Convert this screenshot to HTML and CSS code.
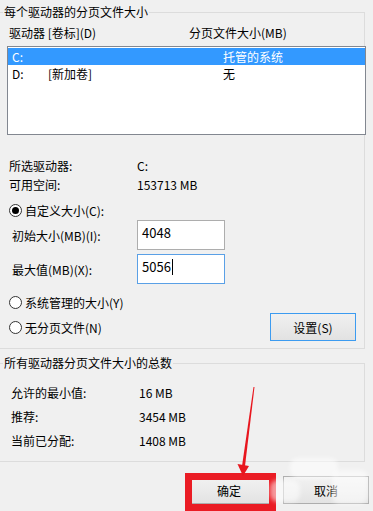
FILE: index.html
```html
<!DOCTYPE html>
<html lang="zh-CN">
<head>
    <meta charset="UTF-8">
    <title>虚拟内存</title>
    <link rel="stylesheet" href="styles.css">
</head>
<body>
    <div class="dialog">
        <div class="group group-drives">
            <div class="group-title">每个驱动器的分页文件大小</div>

            <div class="col-head">
                <span class="col-drive">驱动器 [卷标](D)</span>
                <span>分页文件大小(MB)</span>
            </div>

            <div class="drive-list">
                <div class="drive-row selected">
                    <span class="c-letter">C:</span>
                    <span class="c-label"></span>
                    <span>托管的系统</span>
                </div>
                <div class="drive-row">
                    <span class="c-letter">D:</span>
                    <span class="c-label">[新加卷]</span>
                    <span>无</span>
                </div>
            </div>

            <div class="info">
                <span>所选驱动器:</span><span>C:</span>
                <span>可用空间:</span><span>153713 MB</span>
            </div>

            <label class="radio-row first">
                <span class="radio checked"></span>自定义大小(C):
            </label>

            <div class="field-row">
                <span class="field-label">初始大小(MB)(I):</span>
                <div class="edit">4048</div>
            </div>
            <div class="field-row second">
                <span class="field-label">最大值(MB)(X):</span>
                <div class="edit focused">5056<span class="caret"></span></div>
            </div>

            <label class="radio-row system">
                <span class="radio"></span>系统管理的大小(Y)
            </label>

            <div class="radio-line">
                <label class="radio-row">
                    <span class="radio"></span>无分页文件(N)
                </label>
                <button class="btn btn-set">设置(S)</button>
            </div>
        </div>

        <div class="group group-total">
            <div class="group-title">所有驱动器分页文件大小的总数</div>
            <div class="totals">
                <span>允许的最小值:</span><span>16 MB</span>
                <span>推荐:</span><span>3454 MB</span>
                <span>当前已分配:</span><span>1408 MB</span>
            </div>
        </div>

        <div class="actions">
            <button class="btn btn-ok">确定</button>
            <button class="btn btn-cancel">取消</button>
        </div>
    </div>

    <!-- annotation drawn on top of the screenshot -->
    <div class="mark-box"></div>
    <svg class="mark-arrow" width="373" height="511" viewBox="0 0 373 511">
        <polygon points="253.5,387 254.5,387 245,466 242,466" fill="#e8161e"/>
        <polygon points="237.5,464 249,466 243,476" fill="#e8161e"/>
    </svg>
    <div class="watermark">
        <span class="wm wm1"></span>
        <span class="wm wm2"></span>
        <span class="wm wm3"></span>
    </div>
</body>
</html>
```

FILE: styles.css
```css
html, body {
    margin: 0;
    padding: 0;
}

body {
    width: 373px;
    height: 511px;
    overflow: hidden;
    position: relative;
    background-color: #f0f0f0;
    font-family: "Microsoft YaHei UI", "Noto Sans CJK SC", sans-serif;
    font-size: 12px;
    color: #000;
}

.dialog {
    padding-top: 12px;
}

.group {
    margin-left: -1px;
    width: 366px;
    box-sizing: border-box;
    border: 1px solid #dcdcdc;
}

.group-title {
    width: fit-content;
    margin: -9px 0 0 3px;
    padding: 0 1px;
    line-height: 16px;
    background-color: #f0f0f0;
}

.group-drives {
    padding-bottom: 7px;
}

.col-head {
    display: flex;
    margin-top: 5px;
    padding-left: 9px;
    line-height: 16px;
}

.col-drive {
    width: 180px;
}

.drive-list {
    margin: 5px 0 0 7px;
    width: 359px;
    height: 89px;
    box-sizing: border-box;
    border: 1px solid #828790;
    padding: 1px 0;
    background-color: #fff;
}

.drive-row {
    display: flex;
    height: 17px;
    line-height: 17px;
    padding-left: 4px;
}

.drive-row.selected {
    background-color: #3399ff;
    color: #fff;
}

.c-letter {
    width: 36px;
}

.c-label {
    width: 175px;
}

.info {
    display: grid;
    grid-template-columns: 128px auto;
    margin-top: 21px;
    padding-left: 9px;
    line-height: 19px;
}

.radio-row {
    display: flex;
    align-items: center;
    height: 20px;
    padding-left: 9px;
}

.radio-row.first {
    margin-top: 6px;
}

.radio-row.system {
    margin-top: 8px;
}

.radio {
    width: 11px;
    height: 11px;
    margin-right: 3px;
    border: 1px solid #333;
    border-radius: 50%;
    background-color: #fff;
    position: relative;
}

.radio.checked::after {
    content: "";
    position: absolute;
    left: 2px;
    top: 2px;
    width: 7px;
    height: 7px;
    border-radius: 50%;
    background-color: #000;
}

.field-row {
    display: flex;
    align-items: center;
    padding-left: 12px;
}

.field-row.second {
    margin-top: 4px;
}

.field-label {
    width: 125px;
}

.edit {
    width: 88px;
    height: 30px;
    box-sizing: border-box;
    padding: 3px 4px;
    line-height: 18px;
    font-size: 13px;
    border: 1px solid #adadad;
    background-color: #fff;
}

.edit.focused {
    border-color: #5aa0e6;
}

.caret {
    display: inline-block;
    width: 1px;
    height: 16px;
    margin-left: 1px;
    vertical-align: -3px;
    background-color: #000;
}

.radio-line {
    display: flex;
    justify-content: space-between;
    align-items: center;
    margin-top: 1px;
    padding-right: 8px;
}

.btn {
    font-family: inherit;
    font-size: 12px;
    color: #000;
    height: 28px;
    width: 86px;
    padding: 0;
    border: 1px solid #adadad;
    background: linear-gradient(#f2f2f2, #e3e3e3);
}

.btn-set {
    border-color: #3c9bf0;
    background: linear-gradient(#f0f0f0, #e2e2e2);
}

.group-total {
    margin-top: 14px;
    padding-bottom: 8px;
}

.totals {
    display: grid;
    grid-template-columns: 128px auto;
    margin-top: 10px;
    padding-left: 11px;
    line-height: 24px;
}

.actions {
    display: flex;
    justify-content: flex-end;
    gap: 11px;
    margin-top: 14px;
    padding-right: 4px;
}

.mark-box {
    position: absolute;
    left: 185px;
    top: 473px;
    width: 91px;
    height: 38px;
    box-sizing: border-box;
    border: 7px solid #ea1c24;
}

.mark-arrow {
    position: absolute;
    left: 0;
    top: 0;
}

.watermark {
    position: absolute;
    left: 268px;
    top: 456px;
    width: 105px;
    height: 55px;
}

.wm {
    position: absolute;
    background-color: rgba(255, 255, 255, 0.55);
    border-radius: 8px;
    filter: blur(2px);
}

.wm1 {
    left: 22px;
    top: 2px;
    width: 48px;
    height: 20px;
}

.wm2 {
    left: 2px;
    top: 24px;
    width: 30px;
    height: 22px;
}

.wm3 {
    left: 64px;
    top: 14px;
    width: 36px;
    height: 34px;
}
```
